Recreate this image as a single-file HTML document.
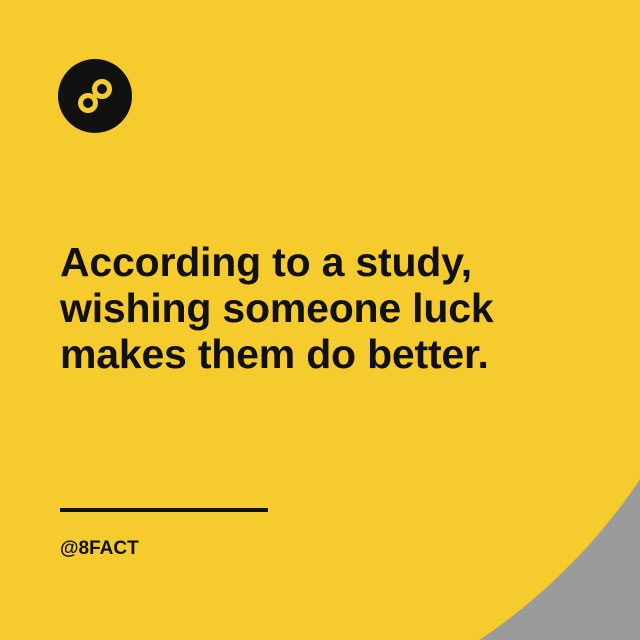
<!DOCTYPE html>
<html><head><style>
html,body{margin:0;padding:0;width:640px;height:640px;overflow:hidden}
body{position:relative;font-family:"Liberation Sans",sans-serif;background:radial-gradient(circle 591px at 150px 150px,#f6cb2d 99.8%,#9b9b9b 100%)}
.t{position:absolute;left:60px;top:239px;font-size:41px;font-weight:bold;line-height:46px;color:#111;letter-spacing:-0.2px}
.l{position:absolute;left:60px;top:508px;width:208px;height:4px;background:#111}
.h{position:absolute;left:60px;top:538px;font-size:19px;font-weight:bold;color:#111}
</style></head><body>
<svg style="position:absolute;left:57px;top:58px" width="76" height="76" viewBox="0 0 76 76">
<circle cx="38" cy="38" r="37" fill="#111"/>
<g fill="none" stroke="#f6cb2d" stroke-width="5">
<circle cx="45" cy="31" r="7.5"/>
<circle cx="31" cy="45" r="7.5"/>
</g>
<path d="M38 38 L40 36" stroke="#f6cb2d" stroke-width="6"/>
</svg>
<div class="t">According to a study,<br>wishing someone luck<br>makes them do better.</div>
<div class="l"></div>
<div class="h">@8FACT</div>
</body></html>
